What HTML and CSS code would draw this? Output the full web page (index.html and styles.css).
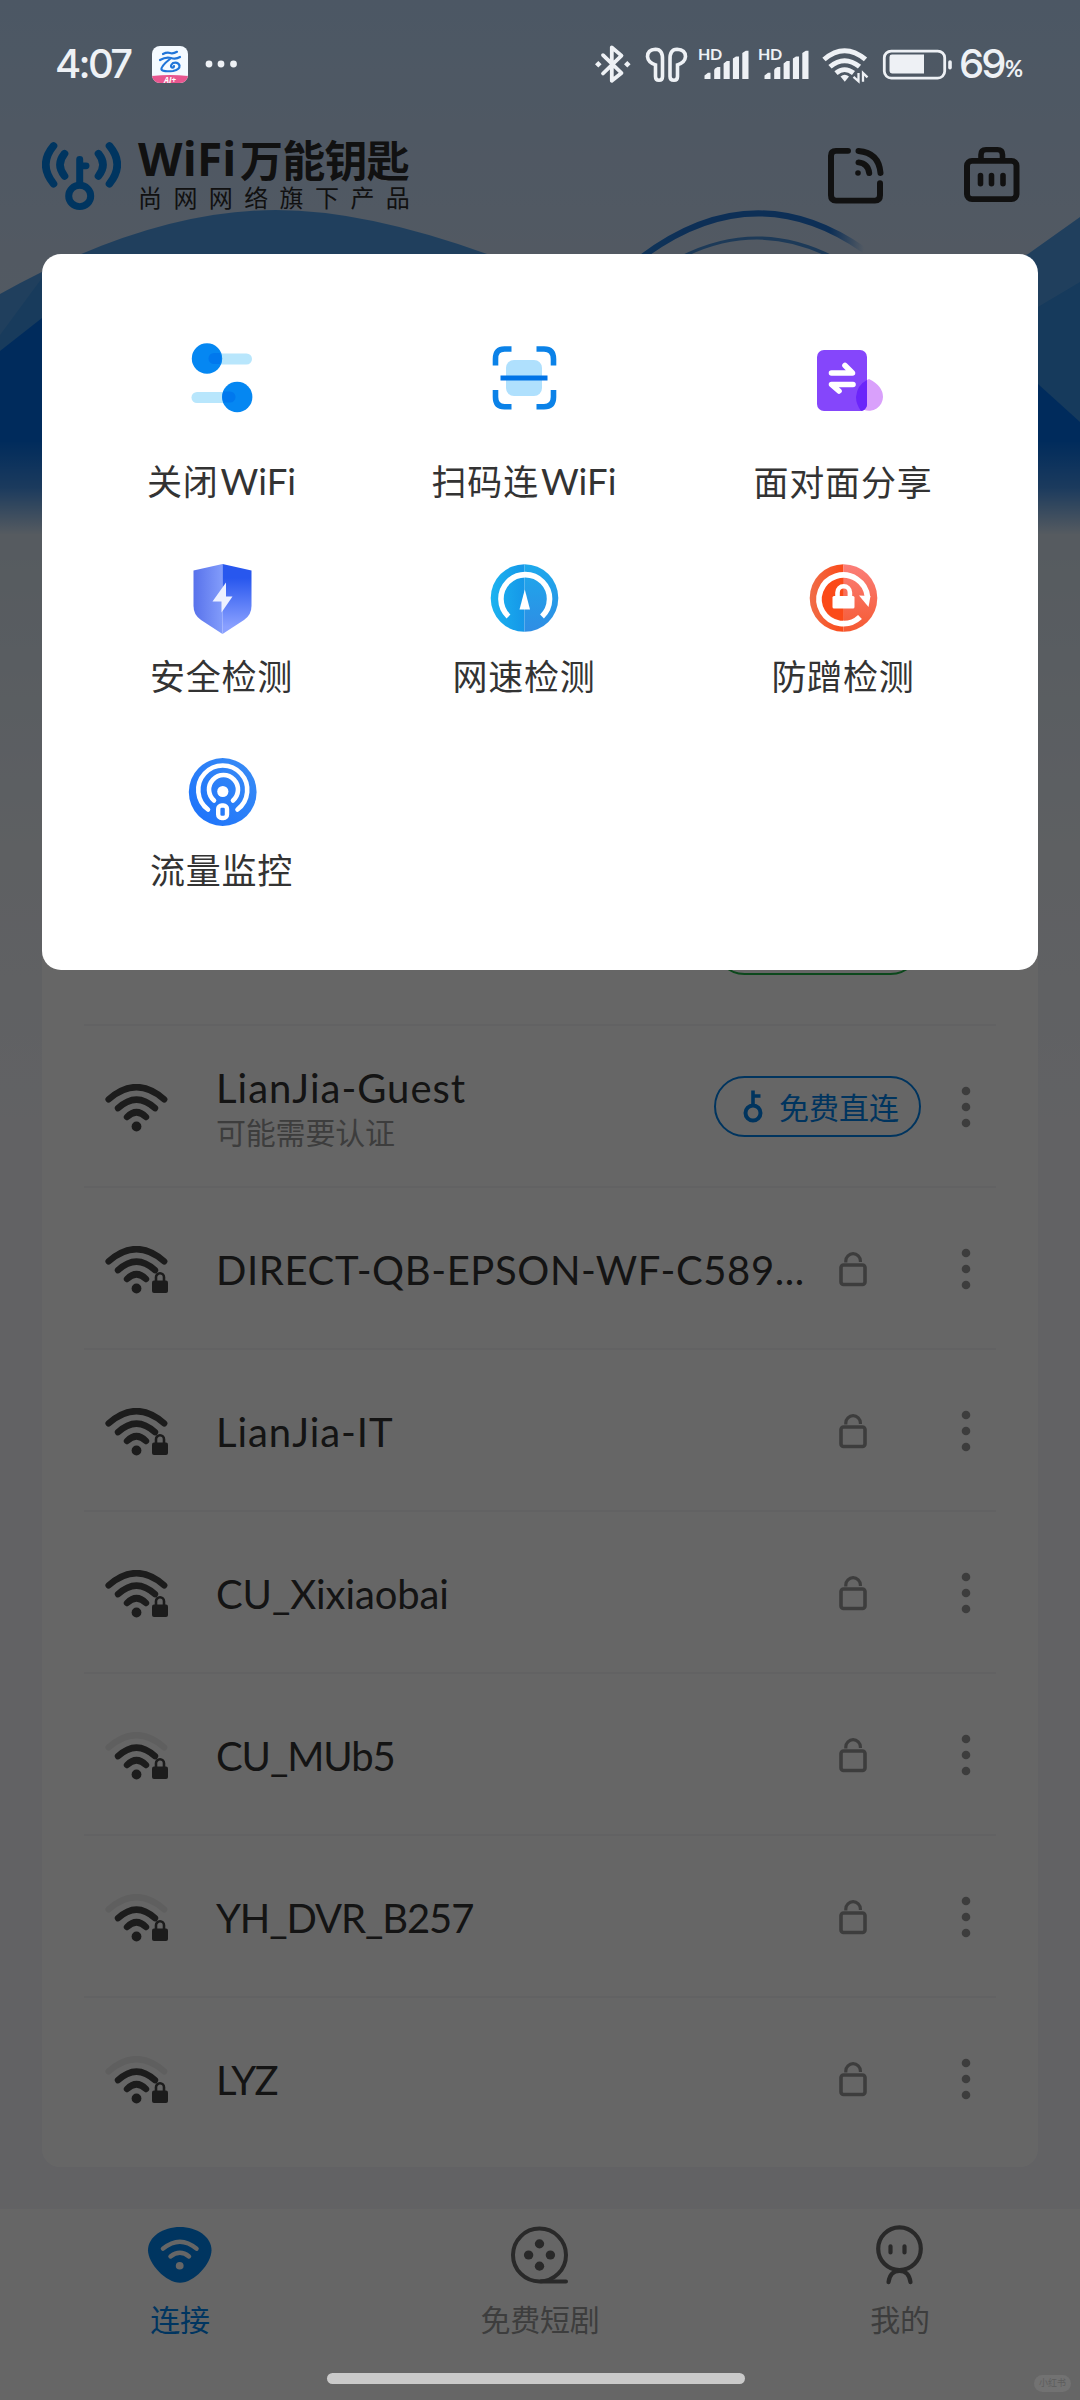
FILE: index.html
```html
<!DOCTYPE html>
<html lang="zh-CN">
<head>
<meta charset="utf-8">
<title>WiFi万能钥匙</title>
<link rel="stylesheet" href="styles.css">
</head>
<body>
<svg class="defs" aria-hidden="true">
  <defs>
    <symbol id="signal" viewBox="0 0 64 50">
      <g fill="none" stroke="currentColor" stroke-width="6.4" stroke-linecap="round">
        <path d="M3.6 15.3 Q31.5 -9 59.2 15.3"/>
        <path d="M13 24.2 Q31.5 7 50 24.2"/>
        <path d="M22 33 Q31.5 23.5 41 33"/>
      </g>
      <circle cx="31.5" cy="42.5" r="4.9" fill="currentColor"/>
    </symbol>
    <symbol id="signal-low" viewBox="0 0 64 50">
      <g fill="none" stroke="currentColor" stroke-width="6.4" stroke-linecap="round">
        <path opacity=".09" d="M3.6 15.3 Q31.5 -9 59.2 15.3"/>
        <path d="M13 24.2 Q31.5 7 50 24.2"/>
        <path d="M22 33 Q31.5 23.5 41 33"/>
      </g>
      <circle cx="31.5" cy="42.5" r="4.9" fill="currentColor"/>
    </symbol>
    <symbol id="badge-lock" viewBox="0 0 20 24">
      <rect x="2" y="9.5" width="16" height="12.5" rx="2" fill="currentColor"/>
      <path d="M6 10V6.3a4 4 0 0 1 8 0V10" fill="none" stroke="currentColor" stroke-width="2.6"/>
    </symbol>
    <symbol id="lock" viewBox="0 0 28 36">
      <rect x="2" y="14" width="24" height="19.5" rx="2.5" fill="none" stroke="currentColor" stroke-width="3.6"/>
      <path d="M6.8 11.5V10a7.3 7.3 0 0 1 14.6 0V11" fill="none" stroke="currentColor" stroke-width="3.2"/>
    </symbol>
    <symbol id="dots" viewBox="0 0 60 44">
      <circle cx="30" cy="6" r="4.3"/><circle cx="30" cy="22" r="4.3"/><circle cx="30" cy="38" r="4.3"/>
    </symbol>
    <symbol id="bars" viewBox="0 0 46 31">
      <path d="M.5 30V26.500L4 23.800H6.500V30zM10.200 30V21Q10.200 19.500 13.500 18H16.300V30zM19.600 30V14.500L22.800 12H25.700V30zM28.900 30V9.500L32 7.500H35V30zM38.300 30V4L41.800 1.800H44.500V30z"/>
    </symbol>
  </defs>
</svg>

<div class="screen">
  <svg class="backdrop" viewBox="0 0 1080 560" aria-hidden="true">
    <defs>
      <linearGradient id="ring" x1="0" x2="1"><stop offset="0" stop-color="#2a85e0"/><stop offset=".2" stop-color="#2277d8"/><stop offset=".85" stop-color="#2277d8"/><stop offset="1" stop-color="#2277d8" stop-opacity="0"/></linearGradient>
      <linearGradient id="mist" x1="0" y1="0" x2="0" y2="1"><stop offset="0" stop-color="#d7e4f0" stop-opacity="0"/><stop offset=".5" stop-color="#d7e4f0" stop-opacity=".32"/><stop offset="1" stop-color="#d7e4f0"/></linearGradient>
    </defs>
    <path d="M0 294Q150 210 276 210Q365 210 487 254L540 276V560H0z" fill="#529fe8"/>
    <path d="M0 335L42 278H500V560H0z" fill="#3791e6" opacity=".8"/>
    <path d="M560 560V470L1028 254L1080 217V560z" fill="#529fe8"/>
    <path d="M1026 314L1080 282V560H900z" fill="#3791e6"/>
    <path d="M0 400V351L42 318H900L1038 384L1080 422V560H0z" fill="#006ce6"/>
    <rect y="440" width="1080" height="95" fill="url(#mist)"/>
    <rect y="534" width="1080" height="26" fill="#d7e4f0"/>
    <path d="M638 260Q752 172 864 250" fill="none" stroke="url(#ring)" stroke-width="6"/>
    <path d="M676 260Q757 216 838 260" fill="none" stroke="#4a91dc" stroke-width="3.200"/>
  </svg>

  <div class="app">
    <header class="header">
      <svg class="brand-mark" viewBox="42 146 79 72" preserveAspectRatio="none">
        <g fill="none" stroke="#0286f0" stroke-linecap="round">
          <path stroke-width="7.600" d="M53.500 151Q38 170 53.500 190M109.500 151Q125 170 109.500 190M64.500 159Q55.500 170.500 64.500 182M98.500 159Q107.500 170.500 98.500 182"/>
          <circle cx="79.700" cy="202.500" r="11" stroke-width="7"/>
          <path stroke-width="7" d="M79.700 165V191M80 171.500H86"/>
        </g>
      </svg>
      <div class="brand">
        <div class="brand-name"><span class="latin">WiFi</span><span>万能钥匙</span></div>
        <div class="brand-sub">尚网网络旗下产品</div>
      </div>
      <svg class="tool" viewBox="826 150 60 62" preserveAspectRatio="none" fill="none" stroke="#2c2c2c" stroke-width="6" stroke-linecap="round">
        <path d="M848 156H836Q831 156 831 161V202Q831 207.500 836 207.500H875Q880 207.500 880 202V189.500"/>
        <path d="M858.500 156.200Q879 158 880.500 179M858.500 168Q868 169 869.200 179"/>
        <circle cx="858" cy="179" r="2.800" fill="#2c2c2c" stroke="none"/>
      </svg>
      <svg class="tool case" viewBox="962 150 60 62" preserveAspectRatio="none" fill="none" stroke="#2c2c2c" stroke-width="6" stroke-linecap="round">
        <rect x="967" y="166.500" width="49.500" height="39.500" rx="5"/>
        <path d="M981 165V160Q981 154.800 986 154.800H997.500Q1002.500 154.800 1002.500 160V165M980.500 181.500V190M991.500 181.500V190M1003 181.500V190" stroke-width="5.600"/>
      </svg>
    </header>

    <main class="card">
      <div class="row"><div class="net"></div><div class="pill green"></div></div>
      <div class="row">
        <span class="wifi"><svg class="sig"><use href="#signal"/></svg></span>
        <div class="net"><div class="name n1">LianJia-Guest</div><div class="hint">可能需要认证</div></div>
        <div class="pill"><svg class="key" viewBox="0 0 20 34" fill="none" stroke="#0283ec" stroke-width="4"><circle cx="10" cy="24" r="7.500"/><path d="M10 16.500V1.500M10 7H17.500" stroke-width="3.600"/></svg><span>免费直连</span></div>
        <svg class="more"><use href="#dots"/></svg>
      </div>
      <div class="row">
        <span class="wifi"><svg class="sig"><use href="#signal"/></svg><svg class="mini"><use href="#badge-lock"/></svg></span>
        <div class="net"><div class="name n2">DIRECT-QB-EPSON-WF-C589...</div></div>
        <svg class="lock"><use href="#lock"/></svg><svg class="more"><use href="#dots"/></svg>
      </div>
      <div class="row">
        <span class="wifi"><svg class="sig"><use href="#signal"/></svg><svg class="mini"><use href="#badge-lock"/></svg></span>
        <div class="net"><div class="name n3">LianJia-IT</div></div>
        <svg class="lock"><use href="#lock"/></svg><svg class="more"><use href="#dots"/></svg>
      </div>
      <div class="row">
        <span class="wifi"><svg class="sig"><use href="#signal"/></svg><svg class="mini"><use href="#badge-lock"/></svg></span>
        <div class="net"><div class="name n4">CU_Xixiaobai</div></div>
        <svg class="lock"><use href="#lock"/></svg><svg class="more"><use href="#dots"/></svg>
      </div>
      <div class="row">
        <span class="wifi"><svg class="sig"><use href="#signal-low"/></svg><svg class="mini"><use href="#badge-lock"/></svg></span>
        <div class="net"><div class="name n5">CU_MUb5</div></div>
        <svg class="lock"><use href="#lock"/></svg><svg class="more"><use href="#dots"/></svg>
      </div>
      <div class="row">
        <span class="wifi"><svg class="sig"><use href="#signal-low"/></svg><svg class="mini"><use href="#badge-lock"/></svg></span>
        <div class="net"><div class="name n6">YH_DVR_B257</div></div>
        <svg class="lock"><use href="#lock"/></svg><svg class="more"><use href="#dots"/></svg>
      </div>
      <div class="row">
        <span class="wifi"><svg class="sig"><use href="#signal-low"/></svg><svg class="mini"><use href="#badge-lock"/></svg></span>
        <div class="net"><div class="name n7">LYZ</div></div>
        <svg class="lock"><use href="#lock"/></svg><svg class="more"><use href="#dots"/></svg>
      </div>
    </main>

    <nav class="tabs">
      <div class="tab active">
        <svg viewBox="146 2226 68 66" preserveAspectRatio="none"><path d="M180 2230C197 2230 211.500 2240 211.500 2254C211.500 2268 194 2287.500 180 2287.500C166 2287.500 148 2268 148 2254C148 2240 163 2230 180 2230Z" fill="#0286f0"/><g fill="none" stroke="#fff" stroke-width="4.500" stroke-linecap="round"><path d="M163 2252.500Q180 2238 196.500 2252.500M170.500 2260.500Q180 2253 189 2260.500"/></g><circle cx="179.700" cy="2270" r="3.900" fill="#fff"/></svg>
        <span>连接</span>
      </div>
      <div class="tab">
        <svg viewBox="506 2226 68 66" preserveAspectRatio="none"><g fill="none" stroke="#666" stroke-width="4" stroke-linecap="round"><ellipse cx="539.500" cy="2259" rx="26.500" ry="27.300"/><path d="M541 2286.300H566"/></g><g fill="#666"><circle cx="528.600" cy="2259" r="4.700"/><circle cx="550.400" cy="2259" r="4.700"/><circle cx="539.500" cy="2247.500" r="4.700"/><circle cx="539.500" cy="2270.500" r="4.700"/></g></svg>
        <span>免费短剧</span>
      </div>
      <div class="tab">
        <svg viewBox="866 2226 68 66" preserveAspectRatio="none"><g fill="none" stroke="#666" stroke-width="4.200" stroke-linecap="round"><ellipse cx="899.500" cy="2252.500" rx="21.300" ry="22"/><path d="M888.500 2287Q890 2275.500 899.500 2275.500Q909 2275.500 910.500 2287M890.500 2250V2256.500M904.500 2250V2256.500"/></g></svg>
        <span>我的</span>
      </div>
    </nav>
  </div>

  <div class="scrim"></div>

  <div class="status">
    <span class="clock">4:07</span>
    <span class="app-badge"><svg viewBox="0 0 36 37"><defs><clipPath id="badge"><rect width="36" height="37" rx="8"/></clipPath></defs><g clip-path="url(#badge)"><rect width="36" height="37" fill="#f4faff"/><path d="M0 30Q18 28 36 30V37H0z" fill="#e8568f"/></g><g fill="none" stroke="#1f74d8" stroke-width="2.200" stroke-linecap="round"><path d="M11 8Q15 6 18 7T25 5.800M8 14Q14 10.500 19 12T28 11M18 13Q9 20 9.500 23.500Q10.500 26 21 25Q28 23.500 27.500 19.500Q26 15.500 21 17Q17.500 20 20 21.500Q22 22 22 20"/></g></svg><em>AI+</em></span>
    <svg class="ellipsis" viewBox="0 0 32 8" fill="#eef1f5"><circle cx="4" cy="4" r="3.400"/><circle cx="16" cy="4" r="3.400"/><circle cx="28.500" cy="4" r="3.400"/></svg>
    <svg class="sys audio" viewBox="590 44 110 44" preserveAspectRatio="none" fill="none" stroke="#eef1f5">
      <path d="M603 56.500L621.500 75L611.800 83V48.500L621.500 57L603 75.500" stroke-width="3.800" stroke-linejoin="round" stroke-linecap="round"/><path d="M595 66l3.300-3.300 3.300 3.300-3.300 3.300zM624 66l3.300-3.300 3.300 3.300-3.300 3.300z" fill="#eef1f5" stroke="none"/>
      <path d="M662.500 78.500V61.500Q663 50.500 655.500 50.500Q647.500 51 647.500 58Q648 64 655.500 66.500V78.500Q655.500 82.500 659 82.500Q662.500 82.500 662.500 78.500ZM670 78.500V61.500Q669.500 50.500 677 50.500Q685.500 51 685.500 58Q685 64 677.500 66.500V78.500Q677.500 82.500 674 82.500Q670 82.500 670 78.500Z" stroke-width="3.600"/>
    </svg>
    <span class="cell"><b>HD</b><svg><use href="#bars"/></svg></span>
    <span class="cell"><b>HD</b><svg><use href="#bars"/></svg></span>
    <svg class="sys power" viewBox="820 44 136 44" preserveAspectRatio="none" fill="none" stroke="#eef1f5">
      <path d="M824 61Q844.500 43 865.500 61M830 68.500Q844.500 56 859.500 68.500M836 75Q844.500 68 853.500 75" stroke-width="5"/><path d="M840.500 78.500Q844.800 75 849 78.500L844.800 84z" fill="#eef1f5" stroke="none"/><path d="M858.500 75V83.500L853.500 79M863 84V75L867.500 79.500" stroke-width="2.300"/>
      <rect x="884.300" y="52.300" width="60.400" height="28" rx="7" stroke-width="2.800"/><path d="M892 56H924V75.500H892Q889.500 75.500 889.500 73V58.500Q889.500 56 892 56Z" fill="#eef1f5" stroke="none"/><path d="M950 63.500V69.500" stroke-width="3.600" stroke-linecap="round"/>
    </svg>
    <span class="level">69</span><span class="pct">%</span>
  </div>

  <section class="panel">
    <div class="item top"><svg viewBox="0 0 80 80"><rect x="30" y="15.500" width="40" height="11" rx="5.500" fill="#b8e6fc"/><rect x="9.500" y="54" width="40" height="11" rx="5.500" fill="#b8e6fc"/><circle cx="25" cy="20.500" r="15.200" fill="#0587f2"/><circle cx="55.200" cy="59" r="15.200" fill="#0587f2"/><path d="M38 15H32a5.500 5.500 0 0 0 0 11H38Q40 20 38 15ZM41.500 53.500H48a5.500 5.500 0 0 1 0 11H42Q39 59 41.500 53.500Z" fill="#0078ee"/></svg><span>关闭<span class="lat">WiFi</span></span></div>
    <div class="item top"><svg viewBox="0 0 80 80"><rect x="22" y="22" width="36" height="36" rx="8" fill="#afe0fd"/><path d="M16.500 40H63.500" stroke="#0073e6" stroke-width="5.200"/><path d="M11.500 27.500V21Q11.500 11 20.500 11H27.500M52.500 11H60Q69.500 11 69.500 21V27.500M11.500 52V59Q11.500 68.700 20.500 68.700H27.500M52.500 68.700H60Q69.500 68.700 69.500 59V52" fill="none" stroke="#0b82e8" stroke-width="5.600"/></svg><span>扫码连<span class="lat">WiFi</span></span></div>
    <div class="item top"><svg viewBox="0 0 80 80"><path d="M66 40Q80 47 80 58A14 14 0 1 1 56 48Q62 41 66 40Z" fill="#d9a0fb"/><rect x="14" y="11" width="50" height="61" rx="7" fill="#8546fb"/><path d="M64 41V66Q63 71.500 58 72Q53 65 53 58Q54 46 64 41Z" fill="#6b25fa"/><g stroke="#fff" stroke-width="5.600" stroke-linecap="round" stroke-linejoin="round" fill="none"><path d="M28.500 34H49.500L42 26.500M50 45.500H28.500L36 52"/></g></svg><span>面对面分享</span></div>

    <div class="item"><svg viewBox="0 0 80 80"><defs><linearGradient id="sl"><stop offset="0" stop-color="#5872eb"/><stop offset="1" stop-color="#829cfb"/></linearGradient><linearGradient id="sr" x1="0" y1="0" x2="0" y2="1"><stop offset=".2" stop-color="#2857ee"/><stop offset=".9" stop-color="#8aa0ff"/></linearGradient></defs><path d="M40.500 6L11.500 12.500V48Q11.500 57 19 62L40.500 76z" fill="url(#sl)"/><path d="M40.500 6L69.500 12.500V48Q69.500 57 62 62L40.500 76z" fill="url(#sr)"/><path d="M44 24.500L30.500 43.500H39.500V54.500L50.500 38.500H44z" fill="#edf1ff"/></svg><span>安全检测</span></div>
    <div class="item"><svg viewBox="0 0 80 80"><defs><linearGradient id="gl"><stop offset="0" stop-color="#1cb3f0"/><stop offset="1" stop-color="#1597e8"/></linearGradient><linearGradient id="gr" x1="0" y1="0" x2="0" y2="1"><stop offset="0" stop-color="#1da9ec"/><stop offset="1" stop-color="#2f8de4"/></linearGradient></defs><path d="M40.500 6.200A33.800 33.800 0 0 0 40.500 73.800z" fill="url(#gl)"/><path d="M40.500 6.200A33.800 33.800 0 0 1 40.500 73.800z" fill="url(#gr)"/><path d="M24.500 58.500A24.300 24.300 0 1 1 58 58.500" fill="none" stroke="#fff" stroke-width="5.600"/><path d="M40.800 31.500L46 51.500H35.500z" fill="#fff"/></svg><span>网速检测</span></div>
    <div class="item"><svg viewBox="0 0 80 80"><defs><linearGradient id="rl"><stop offset="0" stop-color="#f06d48"/><stop offset="1" stop-color="#fb4a18"/></linearGradient><linearGradient id="rr" x1="0" y1="0" x2="0" y2="1"><stop offset="0" stop-color="#fb7e79"/><stop offset="1" stop-color="#f55a32"/></linearGradient></defs><path d="M40.500 6.200A33.800 33.800 0 0 0 40.500 73.800z" fill="url(#rl)"/><path d="M40.500 6.200A33.800 33.800 0 0 1 40.500 73.800z" fill="url(#rr)"/><path d="M40.500 18A22 22 0 0 0 40.500 62z" fill="#fb4a18"/><path d="M57 59A24.300 24.300 0 1 1 64.500 39" fill="none" stroke="#fff" stroke-width="5.600"/><path d="M56 37.500L67.500 38L65.500 49z" fill="#fff"/><rect x="29.500" y="38" width="22" height="12.500" rx="1.500" fill="#fff"/><path d="M34.500 39V34.500A6.200 6.200 0 0 1 46.900 34.500V39" fill="none" stroke="#fff" stroke-width="4.600"/></svg><span>防蹭检测</span></div>

    <div class="item"><svg viewBox="0 0 80 80"><defs><linearGradient id="mo" x1="1" y1="0" x2="0" y2="1"><stop offset="0" stop-color="#3a8df5"/><stop offset="1" stop-color="#1b71fb"/></linearGradient></defs><circle cx="40.700" cy="40" r="33.900" fill="url(#mo)"/><g fill="none" stroke="#fff" stroke-width="4.600" stroke-linecap="round"><path d="M26 57.500A24.500 24.500 0 1 1 55.500 57.500M32 48.500A14.500 14.500 0 1 1 51 48.500"/></g><circle cx="40.800" cy="39.500" r="5.600" fill="#fff"/><rect x="36.200" y="53.500" width="8.800" height="12.500" rx="3.500" fill="none" stroke="#fff" stroke-width="4.400"/></svg><span>流量监控</span></div>
  </section>

  <div class="home-bar"></div>
  <div class="mark">小红书</div>
</div>
</body>
</html>
```
FILE: styles.css
```css
* { box-sizing: border-box; }
body { margin: 0; font-family: Lato, "Noto Sans CJK SC", sans-serif; }
svg { display: block; flex: none; }
.defs { position: absolute; width: 0; height: 0; }

.screen {
  position: relative;
  width: 1080px;
  height: 2400px;
  overflow: hidden;
  background: linear-gradient(#bedafa 0, #cddff6 260px, #d7e4f0 540px, #ebf0f6 860px, #f5f5fa 1150px);
}
.backdrop { position: absolute; top: 0; left: 0; width: 1080px; height: 560px; }
.app { position: relative; display: flex; flex-direction: column; height: 2400px; }

.header { display: flex; align-items: flex-start; height: 864px; padding: 141px 58px 0 42px; }
.brand-mark { width: 79px; height: 70px; }
.brand { flex: 1; margin: -4px 0 0 17px; color: #2c2c2c; }
.brand-name { display: flex; align-items: center; height: 42px; font: 700 43px/42px "Noto Sans CJK SC", sans-serif; letter-spacing: -.8px; }
.brand-name .latin { width: 102px; font: 700 46px/42px "Open Sans", sans-serif; letter-spacing: .2px; }
.brand-sub { margin-top: 4px; font: 400 24px/28px "Noto Sans CJK SC", sans-serif; letter-spacing: 11.4px; white-space: nowrap; }
.tool { width: 60px; height: 60px; margin-top: 4px; }
.case { margin-left: 76px; }

.card { height: 1303px; margin: 0 42px; padding: 0 42px; border-radius: 18px; background: #fff; }
.row { display: flex; align-items: center; height: 162px; border-bottom: 2px solid #f6f6f8; }
.row:last-child { height: 160px; border-bottom: 0; }
.wifi { position: relative; width: 64px; height: 50px; margin: 6px 0 0 21px; color: #464646; }
.sig { width: 64px; height: 50px; }
.mini { position: absolute; left: 45px; top: 25px; width: 20px; height: 24px; }
.net { flex: 1; min-width: 0; margin: 3px 0 0 47px; }
.name { font-size: 40px; line-height: 48px; color: #333; white-space: nowrap; }
.n1 { letter-spacing: 1px; }
.n2 { letter-spacing: .6px; }
.n3 { letter-spacing: .95px; }
.n4 { letter-spacing: -.1px; }
.n5 { letter-spacing: -1.1px; }
.n6 { letter-spacing: -1.1px; }
.n7 { letter-spacing: -1.6px; }
.hint { margin-top: -2px; font: 400 30px/42px "Noto Sans CJK SC", sans-serif; letter-spacing: -.2px; color: #999; }
.lock { width: 28px; height: 36px; margin: 2px 69px 0 0; color: #999; }
.more { width: 60px; height: 44px; margin-top: 2px; fill: #999; }
.pill {
  display: flex; align-items: center; gap: 16px;
  width: 207px; height: 61px; margin-right: 15px; padding-left: 27px;
  border: 2px solid #0283ec; border-radius: 31px;
  font: 400 30px/55px "Noto Sans CJK SC", sans-serif; color: #0283ec; white-space: nowrap;
}
.key { width: 20px; height: 34px; }
.green { margin-right: 75px; border-color: #1eb446; }

.tabs { display: flex; height: 191px; margin-top: auto; padding-top: 14px; background: #fff; }
.tab { flex: 1; display: flex; flex-direction: column; align-items: center; gap: 9px; font: 400 30px/44px "Noto Sans CJK SC", sans-serif; letter-spacing: -.2px; color: #999; }
.tab svg { width: 68px; height: 64px; }
.tab.active { color: #0286f0; }

.scrim { position: absolute; inset: 0; background: rgba(0, 0, 0, .6); }

.status { position: absolute; top: 43px; left: 0; width: 1080px; height: 42px; display: flex; align-items: center; color: #eef1f5; }
.clock { width: 152px; padding-left: 55px; font: 500 40px/42px Inter, sans-serif; letter-spacing: -2.7px; }
.app-badge { position: relative; width: 36px; height: 37px; }
.app-badge em { position: absolute; left: 0; right: 0; bottom: -1px; text-align: center; font: italic 700 8px/9px "Open Sans", sans-serif; color: #fff; }
.ellipsis { width: 32px; height: 8px; margin: 0 353px 0 17px; }
.sys { height: 42.6px; }
.audio { width: 110px; }
.power { width: 136px; }
.cell { position: relative; display: flex; width: 60px; height: 42px; align-items: flex-end; padding: 0 0 5px 4px; }
.cell svg { width: 46px; height: 31px; fill: #eef1f5; }
.cell b { position: absolute; left: -2px; top: 2px; font: 700 16px/18px Lato, sans-serif; letter-spacing: -.4px; }
.level { width: 46px; margin-left: 3px; font: 500 40px/42px Inter, sans-serif; letter-spacing: -3px; }
.pct { padding-top: 9px; font: 700 22px/30px Lato, sans-serif; }

.panel {
  position: absolute; left: 42px; top: 254px; width: 996px; height: 716px;
  display: grid; grid-template-columns: 291px 314px 324px; grid-auto-rows: 194px;
  padding: 55px 33px 0 34px; border-radius: 19px; background: #fff;
}
.item { display: flex; flex-direction: column; align-items: center; justify-content: flex-end; gap: 17px; padding-bottom: 2px; font: 400 35px/40px "Noto Sans CJK SC", sans-serif; letter-spacing: .8px; color: #333; }
.item svg { width: 80px; height: 80px; }
.top { gap: 42px; }
.lat { margin-left: 2px; font: 400 36.5px/40px Lato, sans-serif; letter-spacing: 0; }

.home-bar { position: absolute; left: 327px; top: 2373px; width: 418px; height: 11px; border-radius: 6px; background: #cacaca; }
.mark { position: absolute; left: 1034px; top: 2375px; width: 37px; height: 17px; border-radius: 9px; background: #727272; color: #5d5d5d; font: 400 9px/16px "Noto Sans CJK SC", sans-serif; text-align: center; }
```
